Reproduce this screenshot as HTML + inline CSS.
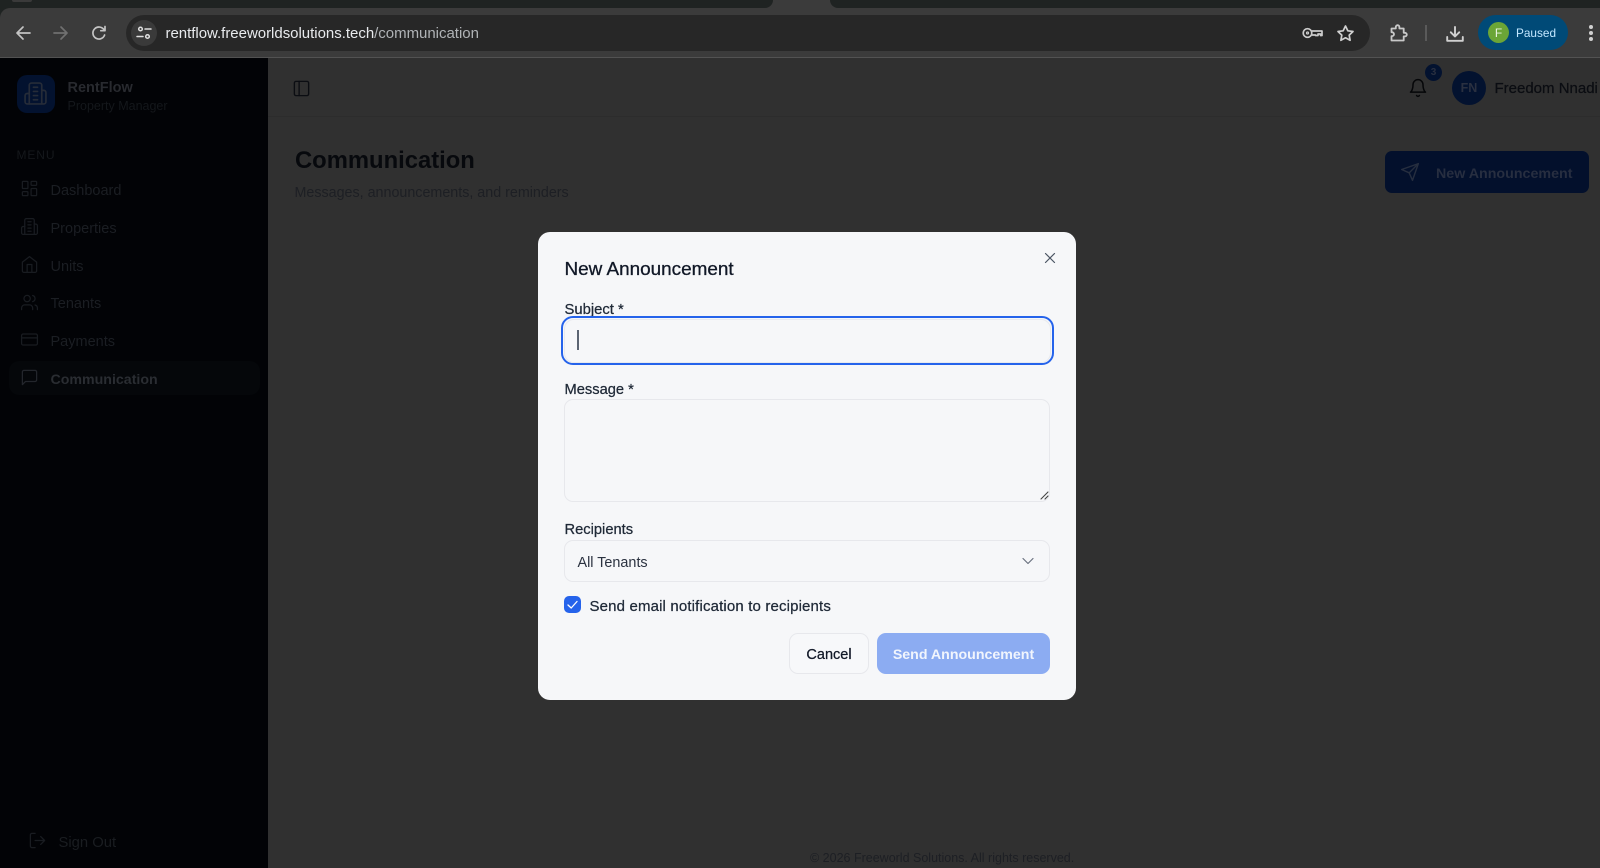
<!DOCTYPE html>
<html lang="en"><head><meta charset="utf-8"><title>RentFlow - Communication</title>
<style>
*{box-sizing:border-box}
html,body{margin:0;padding:0;width:1600px;height:868px;overflow:hidden;background:#303030;font-family:"Liberation Sans",sans-serif}
.t{position:absolute;white-space:nowrap;line-height:20px;height:20px}
.b{position:absolute}
svg{position:absolute;fill:none;stroke-linecap:round;stroke-linejoin:round;overflow:visible}
.m{-webkit-text-stroke:.25px currentColor}
</style></head><body>
<!-- browser chrome -->
<div class="b" style="left:0;top:0;width:1600px;height:58px;background:#3b3b3b;border-bottom:1px solid #525252"></div>
<div class="b" style="left:0;top:0;width:773px;height:8px;background:#1f2322;border-radius:0 0 10px 0"></div>
<div class="b" style="left:830px;top:0;width:770px;height:8px;background:#1f2322;border-radius:0 0 0 10px"></div>
<svg style="left:0;top:8px" width="10" height="10" viewBox="0 0 10 10"><path d="M0 0h10a10 10 0 0 0-10 10z" style="fill:#1f2322"/></svg>
<div class="b" style="left:12px;top:0;width:20px;height:2px;background:#3a3a3a;border-radius:0 0 4px 4px"></div>
<svg style="left:13px;top:22px" width="22" height="22" viewBox="0 0 22 22" stroke="#c4c4c4" stroke-width="1.700"><path d="M17 11H4M10 5l-6 6 6 6"/></svg>
<svg style="left:49px;top:22px" width="22" height="22" viewBox="0 0 22 22" stroke="#707070" stroke-width="1.700"><path d="M5 11h13M12 5l6 6-6 6"/></svg>
<svg style="left:88px;top:22px" width="22" height="22" viewBox="0 0 22 22" stroke="#c4c4c4" stroke-width="1.700"><path d="M16.600 13a6 6 0 1 1-.6-5.200M17 4.500v4.200h-4.200"/></svg>
<div class="b" style="left:126px;top:15px;width:1244px;height:36px;background:#272727;border-radius:18px"></div>
<div class="b" style="left:131px;top:20px;width:26px;height:26px;background:#3a3a3a;border-radius:50%"></div>
<svg style="left:136px;top:25px" width="16" height="16" viewBox="0 0 16 16" stroke="#e0e0e0" stroke-width="1.500"><circle cx="4.500" cy="4" r="1.800"/><path d="M9 4h6M1 11.500h6"/><circle cx="11.500" cy="11.500" r="1.800"/></svg>
<div class="t" style="left:165.500px;top:24px;font-size:15px;color:#e8eaed;letter-spacing:-.02px">rentflow.freeworldsolutions.tech<span style="color:#b0b3b6">/communication</span></div>
<svg style="left:1302px;top:27px" width="21" height="12" viewBox="0 0 21 12" stroke="#cccccc" stroke-width="1.700"><circle cx="5.500" cy="6" r="4.300"/><circle cx="5.500" cy="6" r="1" stroke-width="1.200"/><path d="M10 4h10v4.500h-1.500V7H16v1.500h-2.500V8H10"/></svg>
<svg style="left:1336px;top:24px" width="19" height="19" viewBox="0 0 19 19" stroke="#d0d0d0" stroke-width="1.700"><path d="M9.500 2l2.300 4.800 5.200.7-3.800 3.600.9 5.200-4.600-2.500-4.600 2.500.9-5.200L2 7.500l5.200-.7z"/></svg>
<svg style="left:1390px;top:24px" width="18" height="18" viewBox="0 0 18 18" stroke="#c8c8c8" stroke-width="1.800"><path d="M1.500 4.500h4.300V3a1.800 1.800 0 0 1 3.600 0v1.500h4.300v4.300H15a1.800 1.800 0 0 1 0 3.600h-1.300v4.100H1.500v-4.300c1.400 0 2.500-.8 2.500-2s-1-2-2.500-2z"/></svg>
<div class="b" style="left:1425px;top:25px;width:2px;height:16px;background:#5a5a5a"></div>
<svg style="left:1446px;top:26px" width="18" height="16" viewBox="0 0 18 16" stroke="#d0d0d0" stroke-width="1.900"><path d="M9 1v9M4.800 6.300 9 10.500l4.200-4.200M1.200 11v3.800h15.600V11"/></svg>
<div class="b" style="left:1478px;top:15px;width:90px;height:35px;background:#004a77;border-radius:18px"></div>
<div class="b" style="left:1488px;top:22px;width:21px;height:21px;background:#6ba536;border-radius:50%"></div>
<div class="t" style="left:1488px;top:23px;width:21px;text-align:center;font-size:12px;color:#e9f3e0">F</div>
<div class="t" style="left:1516px;top:23px;font-size:11.800px;color:#c2e7ff">Paused</div>
<div class="b" style="left:1589px;top:25px;width:4px;height:4px;border-radius:50%;background:#d0d0d0"></div>
<div class="b" style="left:1589px;top:31px;width:4px;height:4px;border-radius:50%;background:#d0d0d0"></div>
<div class="b" style="left:1589px;top:37px;width:4px;height:4px;border-radius:50%;background:#d0d0d0"></div>

<!-- sidebar -->
<div class="b" style="left:0;top:58px;width:268px;height:810px;background:#020306"></div>
<div class="b" style="left:17px;top:75px;width:37.500px;height:38px;background:#03122f;border-radius:10px"></div>
<svg style="left:23px;top:81px" width="25" height="25" viewBox="0 0 24 24" stroke="#262c38" stroke-width="1.600"><path d="M6 22V4a2 2 0 0 1 2-2h8a2 2 0 0 1 2 2v18Z"/><path d="M6 12H4a2 2 0 0 0-2 2v6a2 2 0 0 0 2 2h2M18 9h2a2 2 0 0 1 2 2v9a2 2 0 0 1-2 2h-2M10 6h4M10 10h4M10 14h4M10 18h4"/></svg>
<div class="t" style="left:67.500px;top:78px;font-size:14.500px;font-weight:bold;color:#282a2f">RentFlow</div>
<div class="t" style="left:67.500px;top:96px;font-size:12.500px;color:#14171b">Property Manager</div>
<div class="t" style="left:16.500px;top:145px;font-size:12px;letter-spacing:.9px;color:#15181c">MENU</div>
<svg style="left:20px;top:179px" width="19" height="19" viewBox="0 0 24 24" stroke="#191c21" stroke-width="1.600"><rect x="3" y="3" width="7" height="9" rx="1"/><rect x="14" y="3" width="7" height="5" rx="1"/><rect x="14" y="12" width="7" height="9" rx="1"/><rect x="3" y="16" width="7" height="5" rx="1"/></svg>
<div class="t" style="left:50.500px;top:181px;font-size:14.500px;color:#1b1e23">Dashboard</div>
<svg style="left:20px;top:217px" width="19" height="19" viewBox="0 0 24 24" stroke="#191c21" stroke-width="1.600"><path d="M6 22V4a2 2 0 0 1 2-2h8a2 2 0 0 1 2 2v18Z"/><path d="M6 12H4a2 2 0 0 0-2 2v6a2 2 0 0 0 2 2h2M18 9h2a2 2 0 0 1 2 2v9a2 2 0 0 1-2 2h-2M10 6h4M10 10h4M10 14h4M10 18h4"/></svg>
<div class="t" style="left:50.500px;top:219px;font-size:14.500px;color:#1b1e23">Properties</div>
<svg style="left:20px;top:255px" width="19" height="19" viewBox="0 0 24 24" stroke="#191c21" stroke-width="1.600"><path d="m3 9 9-7 9 7v11a2 2 0 0 1-2 2H5a2 2 0 0 1-2-2z"/><path d="M9 22V12h6v10"/></svg>
<div class="t" style="left:50.500px;top:256.500px;font-size:14.500px;color:#1b1e23">Units</div>
<svg style="left:20px;top:293px" width="19" height="19" viewBox="0 0 24 24" stroke="#191c21" stroke-width="1.600"><path d="M16 21v-2a4 4 0 0 0-4-4H6a4 4 0 0 0-4 4v2"/><circle cx="9" cy="7" r="4"/><path d="M22 21v-2a4 4 0 0 0-3-3.870M16 3.130a4 4 0 0 1 0 7.750"/></svg>
<div class="t" style="left:50.500px;top:294px;font-size:14.500px;color:#1b1e23">Tenants</div>
<svg style="left:20px;top:330px" width="19" height="19" viewBox="0 0 24 24" stroke="#191c21" stroke-width="1.600"><rect x="2" y="5" width="20" height="14" rx="2"/><path d="M2 10h20"/></svg>
<div class="t" style="left:50.500px;top:331.500px;font-size:14.500px;color:#1b1e23">Payments</div>
<div class="b" style="left:9px;top:361px;width:251px;height:34px;background:#05070a;border-radius:10px"></div>
<svg style="left:20px;top:368px" width="19" height="19" viewBox="0 0 24 24" stroke="#23262c" stroke-width="1.600"><path d="M21 15a2 2 0 0 1-2 2H7l-4 4V5a2 2 0 0 1 2-2h14a2 2 0 0 1 2 2z"/></svg>
<div class="t" style="left:50.500px;top:370px;font-size:14.200px;font-weight:bold;color:#2a2d32">Communication</div>
<svg style="left:28px;top:831px" width="19" height="19" viewBox="0 0 24 24" stroke="#191c21" stroke-width="1.600"><path d="M9 21H5a2 2 0 0 1-2-2V5a2 2 0 0 1 2-2h4M16 17l5-5-5-5M21 12H9"/></svg>
<div class="t" style="left:58.500px;top:833px;font-size:14.800px;color:#1a1d21">Sign Out</div>

<!-- main -->
<div class="b" style="left:268px;top:116px;width:1332px;height:1px;background:#2c2c2c"></div>
<svg style="left:292px;top:78.500px" width="19" height="19" viewBox="0 0 24 24" stroke="#0b0d12" stroke-width="1.700"><rect x="3" y="3" width="18" height="18" rx="2"/><path d="M9 3v18"/></svg>
<svg style="left:1408px;top:78px" width="20" height="20" viewBox="0 0 24 24" stroke="#050608" stroke-width="1.800"><path d="M6 8a6 6 0 0 1 12 0c0 7 3 9 3 9H3s3-2 3-9"/><path d="M10.300 21a1.940 1.940 0 0 0 3.400 0"/></svg>
<div class="b" style="left:1425px;top:64px;width:17px;height:17px;border-radius:50%;background:#03122f"></div>
<div class="t" style="left:1425px;top:62.500px;width:17px;text-align:center;font-size:10px;font-weight:bold;color:#2a3040">3</div>
<div class="b" style="left:1452px;top:71px;width:34px;height:34px;border-radius:50%;background:#03122f"></div>
<div class="t" style="left:1452px;top:78px;width:34px;text-align:center;font-size:12.500px;font-weight:bold;color:#2a3040">FN</div>
<div class="t m" style="left:1494.500px;top:79px;font-size:15px;color:#0b0d12">Freedom Nnadi</div>
<div class="t" style="left:295px;top:150px;font-size:23.800px;line-height:22px;font-weight:bold;color:#07090d">Communication</div>
<div class="t" style="left:294.500px;top:182.500px;font-size:14.300px;color:#1d1f24">Messages, announcements, and reminders</div>
<div class="b" style="left:1385px;top:151px;width:204px;height:42px;background:#03102c;border-radius:7px"></div>
<svg style="left:1400px;top:162px" width="20" height="20" viewBox="0 0 24 24" stroke="#262e3f" stroke-width="1.700"><path d="m22 2-7 20-4-9-9-4Z"/><path d="M22 2 11 13"/></svg>
<div class="t" style="left:1436px;top:164px;font-size:14.250px;font-weight:bold;color:#272e40">New Announcement</div>
<div class="t" style="left:810px;top:848px;font-size:12.500px;color:#1d1f24">© 2026 Freeworld Solutions. All rights reserved.</div>

<!-- modal -->
<div class="b" style="left:538px;top:232px;width:538px;height:468px;background:#f6f7f9;border-radius:12px"></div>
<div class="t m" style="left:564.500px;top:260px;font-size:18.900px;color:#111827;-webkit-text-stroke-width:.3px">New Announcement</div>
<svg style="left:1043px;top:251px" width="14" height="14" viewBox="0 0 14 14" stroke="#4b5563" stroke-width="1.200"><path d="M2.500 2.500l9 9M11.500 2.500l-9 9"/></svg>
<div class="t m" style="left:564.500px;top:299.500px;font-size:14.800px;color:#1f2937">Subject *</div>
<div class="b" style="left:561px;top:316px;width:493px;height:49px;border:2px solid #2563eb;border-radius:12px"></div>
<div class="b" style="left:563.500px;top:318.500px;width:487px;height:44px;border:1px solid #e8eaee;border-radius:10px"></div>
<div class="b" style="left:577px;top:330px;width:1.500px;height:20px;background:#5b6472"></div>
<div class="t m" style="left:564.500px;top:379.500px;font-size:14.700px;color:#1f2937">Message *</div>
<div class="b" style="left:564px;top:399px;width:486px;height:103px;border:1px solid #e7e8ec;border-radius:9px"></div>
<svg style="left:1040px;top:491px" width="9" height="9" viewBox="0 0 9 9" stroke="#444" stroke-width="1.100"><path d="M1 8l7-7M5 8l3-3"/></svg>
<div class="t m" style="left:564.500px;top:520px;font-size:14.700px;color:#1f2937">Recipients</div>
<div class="b" style="left:564px;top:540px;width:486px;height:42px;border:1px solid #e7e8ec;border-radius:9px"></div>
<div class="t" style="left:577.500px;top:553px;font-size:14.400px;color:#2b3240">All Tenants</div>
<svg style="left:1021px;top:554px" width="14" height="14" viewBox="0 0 14 14" stroke="#6b7280" stroke-width="1.200"><path d="M2 4.500l5 5 5-5"/></svg>
<div class="b" style="left:564px;top:596px;width:17px;height:17px;background:#2563eb;border-radius:5px"></div>
<svg style="left:564px;top:596px" width="17" height="17" viewBox="0 0 17 17" stroke="#fff" stroke-width="1.300"><path d="M4 9l3.200 3L13 5.500"/></svg>
<div class="t m" style="left:589.500px;top:597px;font-size:15px;letter-spacing:.15px;color:#1f2937">Send email notification to recipients</div>
<div class="b" style="left:789px;top:633px;width:80px;height:41px;border:1px solid #e7e8ec;border-radius:9px;background:#f7f8fa"></div>
<div class="t m" style="left:789px;top:644.500px;width:80px;text-align:center;font-size:14.500px;color:#111827">Cancel</div>
<div class="b" style="left:877px;top:633px;width:173px;height:41px;background:#8cacf2;border-radius:9px"></div>
<div class="t" style="left:877px;top:644.500px;width:173px;text-align:center;font-size:14.200px;font-weight:bold;color:#f1f5fd">Send Announcement</div>
</body></html>
